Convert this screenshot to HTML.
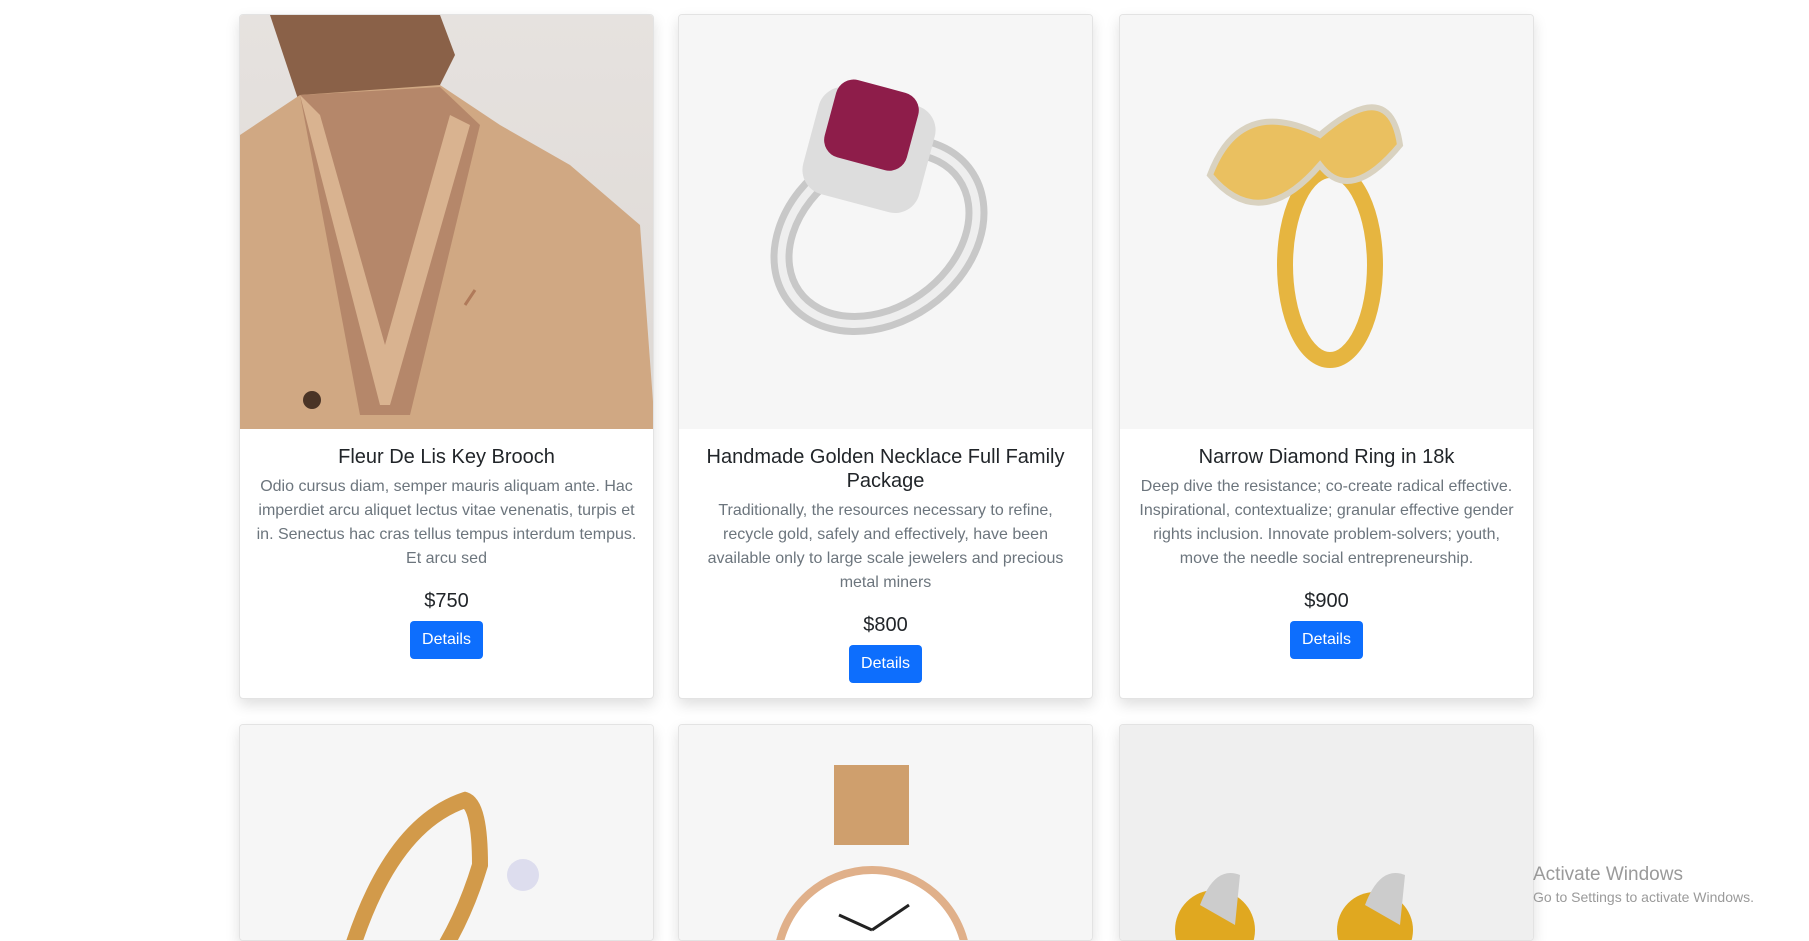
<!DOCTYPE html>
<html><head><meta charset="utf-8"><style>
*{box-sizing:border-box;margin:0;padding:0}
body{width:1809px;height:941px;overflow:hidden;background:#fff;font-family:"Liberation Sans",Arial,sans-serif;position:relative}
.card{position:absolute;width:415px;background:#fff;border:1px solid #e3e3e3;border-radius:4px;box-shadow:0 6px 14px rgba(0,0,0,.13);overflow:hidden;text-align:center}
.img{height:414px;background:#f6f6f6;position:relative}
.body{padding:16px 16px 37px}
h5{font-size:20px;font-weight:400;line-height:24px;color:#212529;margin-bottom:6px}
p{font-size:16px;line-height:24px;color:#6c757d}
.price{font-size:20px;line-height:24px;color:#212529;margin-top:18px}
.btn{display:inline-block;margin-top:8px;background:#0d6efd;color:#fff;font-size:16px;line-height:24px;padding:7px 12px;border-radius:4px}
.wm{position:absolute;left:1533px;top:864px;color:#9a9a9a}
</style></head><body>

<div class="card" style="left:239px;top:14px;height:685px">
 <div class="img" style="background:linear-gradient(#e6e2df,#ddd8d4)">
  <svg width="415" height="414" viewBox="0 0 415 414">
   <path d="M30 0 L200 0 L215 40 L200 70 L140 100 L60 90 Z" fill="#8a6148"/>
   <path d="M0 120 L60 80 L200 70 L260 110 L330 150 L400 210 L415 414 L0 414 Z" fill="#d0a883"/>
   <path d="M60 80 L120 400 L170 400 L240 110 L200 72 Z" fill="#b5876a"/>
   <path d="M60 80 L140 390 L150 390 L230 110 L210 100 L145 330 L80 100 Z" fill="#d9b390"/>
   <circle cx="72" cy="385" r="9" fill="#4a3426"/>
   <path d="M225 290 L235 275" stroke="#b07a5a" stroke-width="3"/>
  </svg>
 </div>
 <div class="body"><h5>Fleur De Lis Key Brooch</h5><p>Odio cursus diam, semper mauris aliquam ante. Hac imperdiet arcu aliquet lectus vitae venenatis, turpis et in. Senectus hac cras tellus tempus interdum tempus. Et arcu sed</p><div class="price">$750</div><span class="btn">Details</span></div>
</div>

<div class="card" style="left:678px;top:14px;height:685px">
 <div class="img">
  <svg width="415" height="414" viewBox="0 0 415 414">
   <ellipse cx="200" cy="220" rx="105" ry="80" transform="rotate(-35 200 220)" fill="none" stroke="#c8c8c8" stroke-width="22"/>
   <ellipse cx="200" cy="220" rx="105" ry="80" transform="rotate(-35 200 220)" fill="none" stroke="#eee" stroke-width="8"/>
   <rect x="130" y="80" width="120" height="110" rx="25" transform="rotate(15 190 135)" fill="#ddd"/>
   <rect x="150" y="70" width="85" height="80" rx="18" transform="rotate(15 192 110)" fill="#8e1d4a"/>
  </svg>
 </div>
 <div class="body"><h5>Handmade Golden Necklace Full Family Package</h5><p>Traditionally, the resources necessary to refine, recycle gold, safely and effectively, have been available only to large scale jewelers and precious metal miners</p><div class="price">$800</div><span class="btn">Details</span></div>
</div>

<div class="card" style="left:1119px;top:14px;height:685px">
 <div class="img">
  <svg width="415" height="414" viewBox="0 0 415 414">
   <ellipse cx="210" cy="250" rx="45" ry="95" fill="none" stroke="#e6b540" stroke-width="16"/>
   <path d="M90 160 Q120 80 200 120 Q270 60 280 130 Q230 190 200 150 Q140 220 90 160Z" fill="#eac060" stroke="#d9d2c0" stroke-width="6"/>
  </svg>
 </div>
 <div class="body"><h5>Narrow Diamond Ring in 18k</h5><p>Deep dive the resistance; co-create radical effective. Inspirational, contextualize; granular effective gender rights inclusion. Innovate problem-solvers; youth, move the needle social entrepreneurship.</p><div class="price">$900</div><span class="btn">Details</span></div>
</div>

<div class="card" style="left:239px;top:724px;height:217px">
 <div class="img"><svg width="415" height="300"><path d="M110 230 Q150 100 225 75 Q240 80 240 140 Q225 190 200 230" fill="none" stroke="#d29a4a" stroke-width="16"/><circle cx="283" cy="150" r="16" fill="#dde"/></svg></div>
</div>
<div class="card" style="left:678px;top:724px;height:217px">
 <div class="img"><svg width="415" height="300"><rect x="155" y="40" width="75" height="80" fill="#cf9f6d"/><ellipse cx="193" cy="240" rx="95" ry="95" fill="#fff" stroke="#e0b08a" stroke-width="8"/><path d="M193 205 L160 190 M193 205 L230 180" stroke="#222" stroke-width="3"/></svg></div>
</div>
<div class="card" style="left:1119px;top:724px;height:217px;">
 <div class="img" style="background:#efefef"><svg width="415" height="300"><circle cx="95" cy="205" r="40" fill="#e0a820"/><circle cx="255" cy="205" r="38" fill="#e0a820"/><path d="M80 180 Q95 140 120 150 L115 200Z" fill="#ccc"/><path d="M245 180 Q260 140 285 150 L280 200Z" fill="#ccc"/></svg></div>
</div>

<div class="wm"><div style="font-size:19px;line-height:22px">Activate Windows</div><div style="font-size:14px;line-height:20px;margin-top:1px">Go to Settings to activate Windows.</div></div>
</body></html>
